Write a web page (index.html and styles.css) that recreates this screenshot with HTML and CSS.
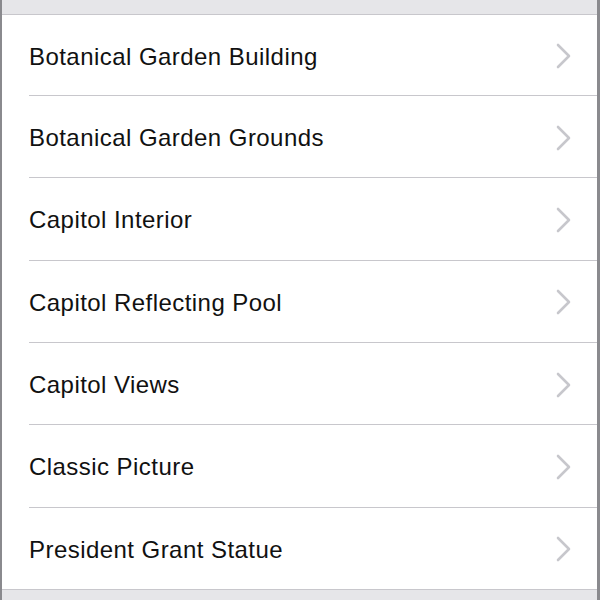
FILE: index.html
```html
<!DOCTYPE html>
<html>
<head>
<meta charset="utf-8">
<link rel="stylesheet" href="styles.css">
</head>
<body>
<div class="frame">
  <div class="header"></div>
  <ul class="list">
    <li class="row first"><span class="label">Botanical Garden Building</span><svg class="chev" viewBox="0 0 16 26"><path d="M2 2 L13 13 L2 24" /></svg></li>
    <li class="row"><span class="label">Botanical Garden Grounds</span><svg class="chev" viewBox="0 0 16 26"><path d="M2 2 L13 13 L2 24" /></svg></li>
    <li class="row"><span class="label">Capitol Interior</span><svg class="chev" viewBox="0 0 16 26"><path d="M2 2 L13 13 L2 24" /></svg></li>
    <li class="row"><span class="label">Capitol Reflecting Pool</span><svg class="chev" viewBox="0 0 16 26"><path d="M2 2 L13 13 L2 24" /></svg></li>
    <li class="row"><span class="label">Capitol Views</span><svg class="chev" viewBox="0 0 16 26"><path d="M2 2 L13 13 L2 24" /></svg></li>
    <li class="row"><span class="label">Classic Picture</span><svg class="chev" viewBox="0 0 16 26"><path d="M2 2 L13 13 L2 24" /></svg></li>
    <li class="row last"><span class="label">President Grant Statue</span><svg class="chev" viewBox="0 0 16 26"><path d="M2 2 L13 13 L2 24" /></svg></li>
  </ul>
  <div class="footer"></div>
</div>
</body>
</html>
```
FILE: styles.css
```css
html, body {
  margin: 0;
  padding: 0;
  width: 600px;
  height: 600px;
  overflow: hidden;
  background: #efeff4;
}
.frame {
  width: 600px;
  height: 600px;
  box-sizing: border-box;
  border-left: 2px solid #8a8a8e;
  border-right: 3px solid #8a8a8e;
  display: flex;
  flex-direction: column;
  background: #efeff4;
}
.header {
  height: 14px;
  flex: none;
  background: #e6e6e9;
  border-bottom: 1px solid #c8c7cc;
}
.list {
  list-style: none;
  margin: 0;
  padding: 0;
  background: #fff;
  border-bottom: 1px solid #c8c7cc;
  flex: none;
}
.row {
  height: 82.33px;
  box-sizing: border-box;
  margin-left: 27px;
  padding-right: 25px;
  display: flex;
  align-items: center;
  justify-content: space-between;
  border-bottom: 1px solid #c8c7cc;
}
.row.first {
  height: 81px;
}
.row.last {
  height: 81.3px;
  border-bottom: none;
}
.label {
  font-family: "Liberation Sans", Arial, sans-serif;
  font-size: 24px;
  letter-spacing: 0.45px;
  color: #111;
  padding-top: 3px;
}
.chev {
  width: 16px;
  height: 26px;
  flex: none;
  margin-top: 2px;
}
.chev path {
  fill: none;
  stroke: #c7c7cc;
  stroke-width: 2.6;
  stroke-linecap: round;
  stroke-linejoin: round;
}
.footer {
  flex: 1;
  background: #e6e6e9;
}
```
